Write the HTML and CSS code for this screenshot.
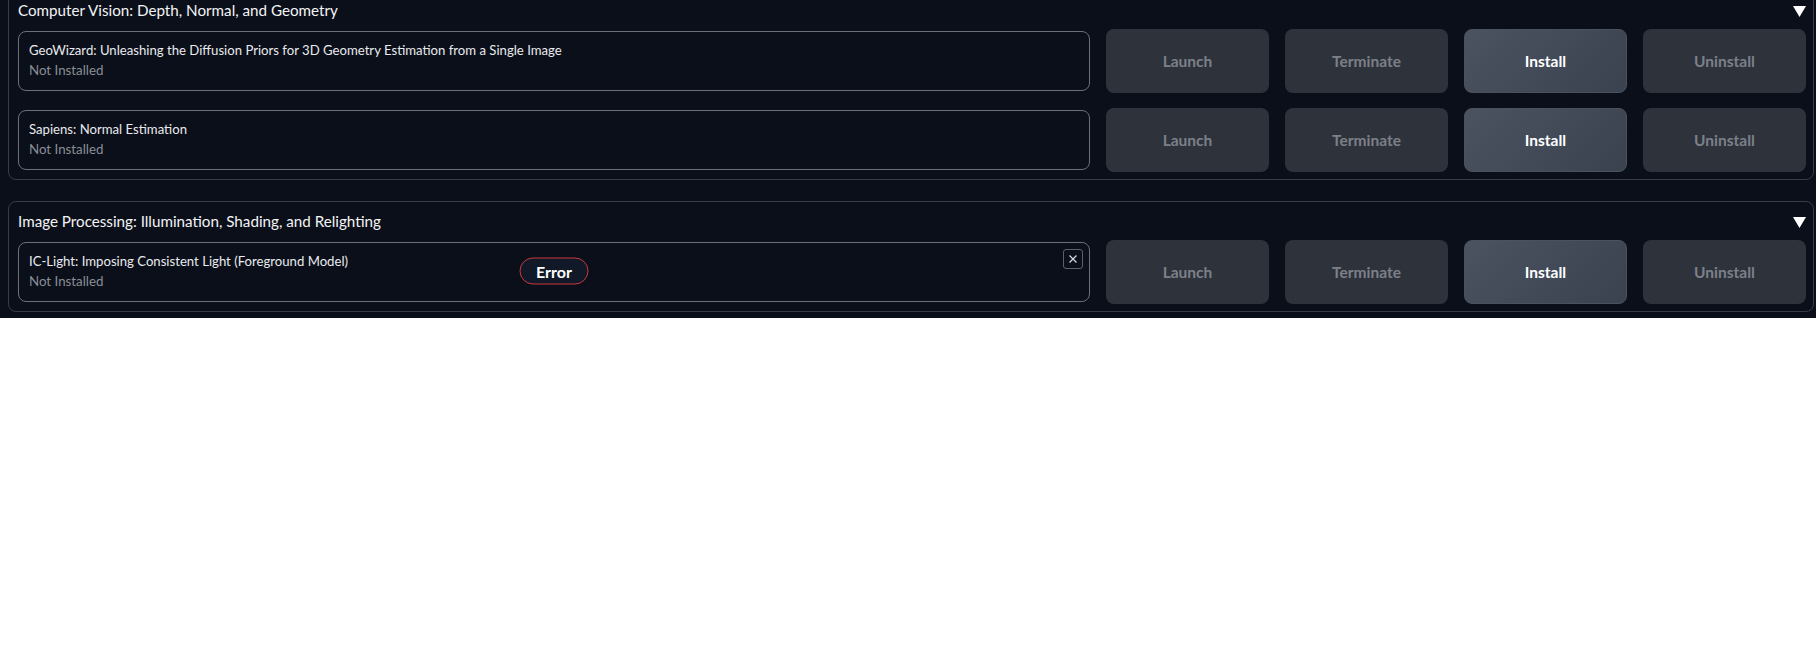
FILE: index.html
```html
<!DOCTYPE html>
<html lang="en">
<head>
<meta charset="utf-8">
<title>Models</title>
<link rel="stylesheet" href="styles.css">
</head>
<body>
<div class="app">
  <div class="stack">
    <section class="group">
      <div class="group-head">
        <span class="group-title">Computer Vision: Depth, Normal, and Geometry</span>
        <svg class="caret" width="13" height="11" viewBox="0 0 13 11"><polygon points="0,0 13,0 6.5,11" fill="#ffffff"/></svg>
      </div>
      <div class="rows">
        <div class="row">
          <div class="card">
            <div class="card-title">GeoWizard: Unleashing the Diffusion Priors for 3D Geometry Estimation from a Single Image</div>
            <div class="card-status">Not Installed</div>
          </div>
          <button class="btn" disabled>Launch</button>
          <button class="btn" disabled>Terminate</button>
          <button class="btn btn-primary">Install</button>
          <button class="btn" disabled>Uninstall</button>
        </div>
        <div class="row">
          <div class="card">
            <div class="card-title">Sapiens: Normal Estimation</div>
            <div class="card-status">Not Installed</div>
          </div>
          <button class="btn" disabled>Launch</button>
          <button class="btn" disabled>Terminate</button>
          <button class="btn btn-primary">Install</button>
          <button class="btn" disabled>Uninstall</button>
        </div>
      </div>
    </section>
    <section class="group">
      <div class="group-head">
        <span class="group-title">Image Processing: Illumination, Shading, and Relighting</span>
        <svg class="caret" width="13" height="11" viewBox="0 0 13 11"><polygon points="0,0 13,0 6.5,11" fill="#ffffff"/></svg>
      </div>
      <div class="rows">
        <div class="row">
          <div class="card card-error">
            <div class="card-title">IC-Light: Imposing Consistent Light (Foreground Model)</div>
            <div class="card-status">Not Installed</div>
            <span class="error-badge">Error</span>
            <span class="close-btn"><svg width="10" height="10" viewBox="0 0 10 10"><path d="M1.5 1.5 L8.5 8.5 M8.5 1.5 L1.5 8.5" stroke="#d1d5db" stroke-width="1.3" fill="none"/></svg></span>
          </div>
          <button class="btn" disabled>Launch</button>
          <button class="btn" disabled>Terminate</button>
          <button class="btn btn-primary">Install</button>
          <button class="btn" disabled>Uninstall</button>
        </div>
      </div>
    </section>
  </div>
</div>
</body>
</html>
```

FILE: styles.css
```css
html, body {
  margin: 0;
  padding: 0;
  background: #ffffff;
}

body {
  font-family: Lato, "Noto Sans", sans-serif;
}

.app {
  background: #0b0f19;
  padding: 0 2px 6px 8px;
  height: 318px;
  box-sizing: border-box;
  overflow: hidden;
}

.stack {
  display: flex;
  flex-direction: column;
  gap: 21px;
  margin-top: -10px;
}

.group {
  border: 1px solid #373c47;
  border-radius: 8px;
  padding: 0 7px 7px 9px;
}

.group-head {
  height: 38px;
  display: flex;
  align-items: flex-start;
  justify-content: space-between;
  box-sizing: border-box;
  padding-top: 8px;
}

.group-title {
  color: #f3f4f6;
  font-size: 15.2px;
  line-height: 22px;
}

.caret {
  margin-top: 7px;
  margin-right: 0;
}

.rows {
  display: flex;
  flex-direction: column;
  gap: 15px;
}

.row {
  display: grid;
  grid-template-columns: 1fr repeat(4, 163px);
  column-gap: 16px;
  height: 64px;
}

.card {
  position: relative;
  margin: 2px 0;
  height: 60px;
  box-sizing: border-box;
  border: 1px solid #6b6f78;
  border-radius: 8px;
  padding: 8px 10px 10px;
  display: flex;
  flex-direction: column;
  justify-content: center;
}

.card-title {
  color: #e8eaee;
  font-size: 13.15px;
  line-height: 20px;
}

.card-status {
  color: #8a8e96;
  font-size: 13.3px;
  line-height: 20px;
}

.btn {
  font-family: Lato, "Noto Sans", sans-serif;
  font-weight: 700;
  font-size: 15.5px;
  border: 1px solid transparent;
  border-radius: 8px;
  background: #2e323b;
  color: #7c8089;
  cursor: default;
}

.btn-primary {
  background: linear-gradient(135deg, #4b5361 0%, #3a4250 100%);
  border-color: #4a5260;
  color: #ffffff;
  cursor: pointer;
}

.error-badge {
  position: absolute;
  left: 50%;
  top: 50%;
  transform: translate(-50%, -50%);
  margin-top: -1px;
  width: 69px;
  height: 27px;
  box-sizing: border-box;
  border: 1.5px solid #c9383c;
  border-radius: 14px;
  background: #111827;
  color: #ffffff;
  font-weight: 700;
  font-size: 16px;
  display: flex;
  align-items: center;
  justify-content: center;
}

.close-btn {
  position: absolute;
  top: 6px;
  right: 6px;
  width: 20px;
  height: 20px;
  box-sizing: border-box;
  border: 1px solid #5b606a;
  border-radius: 3px;
  display: flex;
  align-items: center;
  justify-content: center;
}
```
